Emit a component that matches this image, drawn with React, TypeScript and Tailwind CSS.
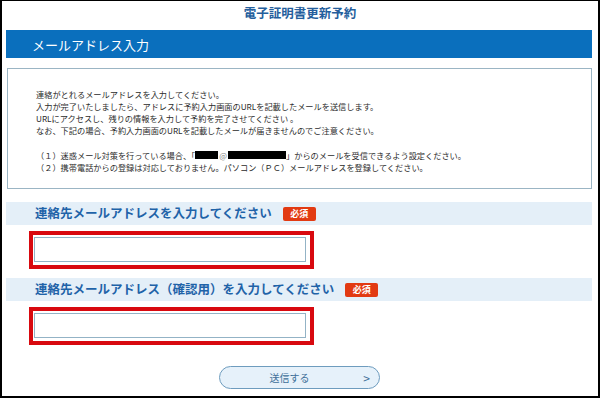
const jp = { fontFamily: '"Noto Sans CJK JP", "Noto Sans", sans-serif' };

function Required() {
  return (
    <span className="ml-[11px] inline-flex h-[14px] w-[33px] items-center justify-center rounded-[2px] bg-[#e23a12] text-[9px] font-bold leading-none text-white">
      必須
    </span>
  );
}

function FieldHeader({ label }: { label: string }) {
  return (
    <div className="flex h-[23px] items-center bg-[#e4eff8] pl-[29px]">
      <span className="text-[12.5px] font-bold leading-none text-[#1f63a8]">{label}</span>
      <Required />
    </div>
  );
}

function EmailField() {
  return (
    <div className="ml-[27px] w-[285px] border-[4px] border-[#d8090f] bg-white pb-[3px] pl-[1px] pr-[4px] pt-[2px]">
      <input
        type="email"
        className="block h-[25px] w-full border border-[#93b3c6] bg-white outline-none"
      />
    </div>
  );
}

export default function App() {
  return (
    <div
      className="h-[398px] w-[600px] overflow-hidden border-2 border-t border-black bg-white"
      style={jp}
    >
      <div className="flex h-[23px] items-end justify-center pb-[5px]">
        <h1 className="text-[12.5px] font-bold leading-none text-[#245e9c]">電子証明書更新予約</h1>
      </div>

      <div className="ml-[4px] mt-[6px] flex h-[28px] w-[586px] items-center bg-[#0a6fbd] pl-[26px]">
        <span className="text-[13px] leading-none text-white">メールアドレス入力</span>
      </div>

      <div className="ml-[5px] mt-[10px] h-[121px] w-[585px] border border-[#9bb5c4] pl-[28px] pt-[19px] text-[8.2px] leading-[12px] text-[#2b2b2b]">
        <p>連絡がとれるメールアドレスを入力してください。</p>
        <p>入力が完了いたしましたら、アドレスに予約入力画面のURLを記載したメールを送信します。</p>
        <p>URLにアクセスし、残りの情報を入力して予約を完了させてください 。</p>
        <p>なお、下記の場合、予約入力画面のURLを記載したメールが届きませんのでご注意ください。</p>
        <p className="mt-[13px] flex items-center">
          <span>（１）迷惑メール対策を行っている場合、「</span>
          <span className="inline-block h-[8px] w-[23px] bg-black" />
          <span className="px-[1px] text-[#888]">@</span>
          <span className="inline-block h-[8px] w-[58px] bg-black" />
          <span>」からのメールを受信できるよう設定ください。</span>
        </p>
        <p>（２）携帯電話からの登録は対応しておりません。パソコン（ＰＣ）メールアドレスを登録してください。</p>
      </div>

      <div className="ml-[4px] mt-[13px] w-[586px]">
        <FieldHeader label="連絡先メールアドレスを入力してください" />
      </div>
      <div className="mt-[6px]">
        <EmailField />
      </div>

      <div className="ml-[4px] mt-[9px] w-[586px]">
        <FieldHeader label="連絡先メールアドレス（確認用）を入力してください" />
      </div>
      <div className="mt-[6px]">
        <EmailField />
      </div>

      <div className="mt-[21px] flex justify-start pl-[217px]">
        <button className="relative flex h-[23px] w-[161px] items-center justify-center rounded-full border border-[#6e9cbe] bg-[#e6f1fa] text-[10px] leading-none text-[#3e6f98]">
          <span className="-ml-[20px]">送信する</span>
          <span className="absolute right-[9px] top-1/2 -translate-y-1/2 text-[12px]">&gt;</span>
        </button>
      </div>
    </div>
  );
}
